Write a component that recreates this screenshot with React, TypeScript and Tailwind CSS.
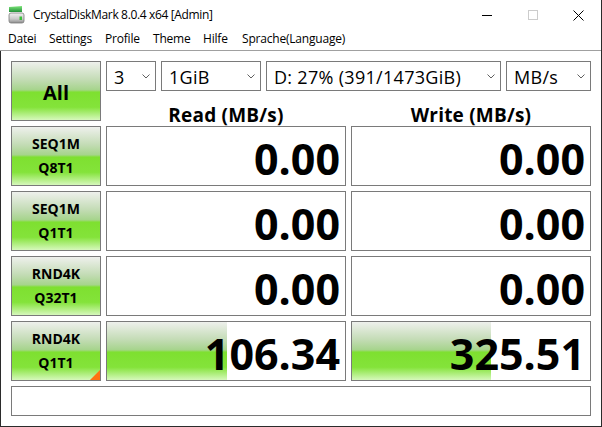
import React from 'react';

const green =
  'bg-[linear-gradient(to_bottom,#eef0ec_0%,#c4dcb6_30%,#a6d48c_48%,#7ee030_52%,#84e33a_78%,#d6f8bc_100%)]';

function AppIcon() {
  return (
    <svg width="17" height="18" viewBox="0 0 17 18">
      <defs>
        <linearGradient id="gtop" x1="0" y1="0" x2="0" y2="1">
          <stop offset="0" stopColor="#7ee67a" />
          <stop offset="1" stopColor="#23913a" />
        </linearGradient>
        <linearGradient id="gbody" x1="0" y1="0" x2="0" y2="1">
          <stop offset="0" stopColor="#f2f2f2" />
          <stop offset="0.6" stopColor="#c9c9c9" />
          <stop offset="1" stopColor="#8c8c8c" />
        </linearGradient>
      </defs>
      <path d="M1 1 L14 0 L14 6 L1 6 Z" fill="url(#gtop)" />
      <rect x="1" y="7" width="15" height="10" rx="2" fill="url(#gbody)" stroke="#7b7b7b" strokeWidth="0.8" />
      <rect x="11.5" y="10.5" width="2.5" height="3.5" fill="#3bbf3b" />
    </svg>
  );
}

function Chevron() {
  return (
    <svg width="8" height="5" viewBox="0 0 8 5" className="shrink-0">
      <path d="M0.5 0.5 L4 4 L7.5 0.5" fill="none" stroke="#606060" strokeWidth="1" />
    </svg>
  );
}

function Combo({ value, width }: { value: string; width: string }) {
  return (
    <div className={`${width} h-[30px] border border-[#7a7a7a] bg-white flex items-center justify-between pl-[7px] pr-[5px]`}>
      <span className="text-[18px] tracking-[0.3px] leading-none text-black pt-[2px]">{value}</span>
      <Chevron />
    </div>
  );
}

function TestButton({ top, bottom, flag }: { top: string; bottom: string; flag?: boolean }) {
  return (
    <div className={`relative h-[60px] border border-[#7a7a7a] ${green} flex flex-col items-center justify-center font-bold text-[14px] leading-[24px] text-black`}>
      <span>{top}</span>
      <span>{bottom}</span>
      {flag && (
        <span className="absolute right-0 bottom-0 w-0 h-0 border-l-[10px] border-l-transparent border-b-[10px] border-b-[#ff7212]" />
      )}
    </div>
  );
}

function Result({ value, bar }: { value: string; bar?: number }) {
  return (
    <div className="relative h-[60px] border border-[#7a7a7a] bg-white overflow-hidden flex items-center justify-end pr-[5px]">
      {bar ? (
        <div
          className={`absolute left-0 top-0 bottom-0 ${green}`}
          style={{ width: bar }}
        />
      ) : null}
      <span className="relative text-[43px] font-bold leading-none text-black mt-[4px]">{value}</span>
    </div>
  );
}

const menu = [
  { label: 'Datei', w: 'w-[41px]' },
  { label: 'Settings', w: 'w-[56px]' },
  { label: 'Profile', w: 'w-[48px]' },
  { label: 'Theme', w: 'w-[50px]' },
  { label: 'Hilfe', w: 'w-[39px]' },
  { label: 'Sprache(Language)', w: 'w-auto' },
];

const rows = [
  { top: 'SEQ1M', bottom: 'Q8T1', read: '0.00', write: '0.00' },
  { top: 'SEQ1M', bottom: 'Q1T1', read: '0.00', write: '0.00' },
  { top: 'RND4K', bottom: 'Q32T1', read: '0.00', write: '0.00' },
  { top: 'RND4K', bottom: 'Q1T1', read: '106.34', write: '325.51', readBar: 120, writeBar: 139, flag: true },
];

export default function App() {
  return (
    <div className="w-[602px] h-[427px] bg-white flex flex-col border-r border-[#2b2b2b] font-['Open_Sans',sans-serif] text-black overflow-hidden">
      {/* Title bar */}
      <div className="h-[30px] flex items-center shrink-0">
        <div className="pl-[8px] pr-[8px] flex items-center">
          <AppIcon />
        </div>
        <span className="text-[12px] tracking-[-0.35px]">CrystalDiskMark 8.0.4 x64 [Admin]</span>
        <div className="ml-auto flex h-full">
          <div className="w-[46px] flex items-center justify-center">
            <div className="w-[10px] h-px bg-black" />
          </div>
          <div className="w-[46px] flex items-center justify-center">
            <div className="w-[10px] h-[10px] border border-[#cccccc]" />
          </div>
          <div className="w-[45px] flex items-center justify-center">
            <svg width="11" height="11" viewBox="0 0 11 11">
              <path d="M0.5 0.5 L10.5 10.5 M10.5 0.5 L0.5 10.5" stroke="#000" strokeWidth="1" />
            </svg>
          </div>
        </div>
      </div>

      {/* Menu bar */}
      <div className="h-[21px] flex items-center pl-[8px] border-b border-[#a0a0a0] shrink-0 text-[12px] tracking-[-0.2px] pb-[2px]">
        {menu.map((m) => (
          <span key={m.label} className={m.w}>
            {m.label}
          </span>
        ))}
      </div>

      {/* Main */}
      <div className="flex-1 border-l border-b border-[#2b2b2b] pl-[10px] pt-[10px]">
        <div className="grid grid-cols-[90px_240px_240px] gap-[5px]">
          <div className={`h-[60px] border border-[#7a7a7a] ${green} flex items-center justify-center text-[20px] font-bold pt-[3px]`}>
            All
          </div>
          <div className="col-span-2 flex flex-col">
            <div className="flex gap-[5px]">
              <Combo value="3" width="w-[50px]" />
              <Combo value="1GiB" width="w-[100px]" />
              <Combo value="D: 27% (391/1473GiB)" width="w-[235px]" />
              <Combo value="MB/s" width="w-[85px]" />
            </div>
            <div className="grid grid-cols-[240px_240px] gap-x-[5px] h-[30px] items-center text-[19px] font-bold">
              <span className="text-center tracking-[0.2px] pt-[10px]">Read (MB/s)</span>
              <span className="text-center tracking-[0.2px] pt-[10px]">Write (MB/s)</span>
            </div>
          </div>

          {rows.map((r, i) => (
            <React.Fragment key={i}>
              <TestButton top={r.top} bottom={r.bottom} flag={r.flag} />
              <Result value={r.read} bar={r.readBar} />
              <Result value={r.write} bar={r.writeBar} />
            </React.Fragment>
          ))}

          <div className="col-span-3 h-[30px] border border-[#7a7a7a] bg-white" />
        </div>
      </div>
    </div>
  );
}
